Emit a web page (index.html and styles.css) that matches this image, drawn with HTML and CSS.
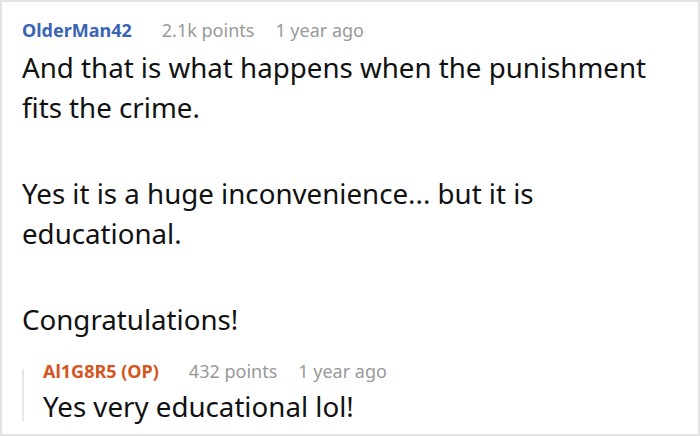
FILE: index.html
```html
<!DOCTYPE html>
<html>
<head>
<meta charset="utf-8">
<link rel="stylesheet" href="styles.css">
</head>
<body>
<div class="card">
  <div class="meta">
    <span class="author blue">OlderMan42</span>
    <span class="info">2.1k points</span>
    <span class="info">1 year ago</span>
  </div>
  <div class="text">
    <p>And that is what happens when the punishment<br>fits the crime.</p>
    <p>Yes it is a huge inconvenience... but it is<br>educational.</p>
    <p>Congratulations!</p>
  </div>
  <div class="reply">
    <div class="meta">
      <span class="author orange">Al1G8R5 (OP)</span>
      <span class="info">432 points</span>
      <span class="info">1 year ago</span>
    </div>
    <div class="text reply-text">
      <p>Yes very educational lol!</p>
    </div>
  </div>
</div>
</body>
</html>
```
FILE: styles.css
```css
html, body {
  margin: 0;
  padding: 0;
  background: #fff;
}
.card {
  box-sizing: border-box;
  width: 700px;
  height: 436px;
  border: 2px solid #e3e3e3;
  padding: 16px 20px 0 20px;
  font-family: "Noto Sans", "Open Sans", sans-serif;
  color: #111;
  overflow: hidden;
}
.meta {
  display: flex;
  align-items: baseline;
  gap: 21px;
  font-size: 18px;
  line-height: 24px;
}
.author {
  font-weight: 700;
  margin-right: 9px;
}
.blue { color: #3a65b4; }
.orange { color: #d5561f; }
.info {
  color: #999;
}
.text {
  font-size: 27.7px;
  line-height: 40px;
  margin-top: 5px;
  white-space: nowrap;
}
.text p {
  margin: 0 0 46px 0;
}
.text p:last-child {
  margin-bottom: 0;
}
.reply {
  position: relative;
  margin-top: 20px;
  padding-left: 21px;
}
.reply::before {
  content: "";
  position: absolute;
  left: 0;
  top: 10px;
  width: 2px;
  height: 52px;
  background: #e6e6e6;
}
.reply-text {
  margin-top: 3px;
}
```
